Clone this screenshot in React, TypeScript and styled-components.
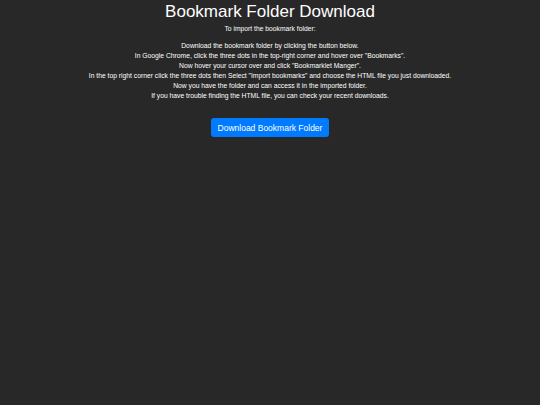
import styled, { createGlobalStyle } from 'styled-components';

const GlobalStyle = createGlobalStyle`
  html, body {
    margin: 0;
    padding: 0;
    background: #282828;
    font-family: "Liberation Sans", Arial, sans-serif;
    color: #ffffff;
  }
`;

const Page = styled.main`
  min-height: 405px;
  display: flex;
  flex-direction: column;
  align-items: center;
  text-align: center;
`;

const Title = styled.h1`
  margin: 0;
  padding-top: 1px;
  font-size: 17px;
  font-weight: 400;
  line-height: 22px;
`;

const Intro = styled.p`
  margin: 1px 0 0;
  font-size: 6.75px;
  line-height: 10px;
`;

const Steps = styled.div`
  margin-top: 7px;
  display: flex;
  flex-direction: column;
  font-size: 6.75px;
  line-height: 10px;
`;

const DownloadButton = styled.button`
  margin-top: 17px;
  padding: 0 7px;
  height: 19px;
  border: none;
  border-radius: 3px;
  background: #007bff;
  color: #ffffff;
  font-family: inherit;
  font-size: 8.5px;
  cursor: pointer;
`;

const steps = [
  'Download the bookmark folder by clicking the button below.',
  'In Google Chrome, click the three dots in the top-right corner and hover over "Bookmarks".',
  'Now hover your cursor over and click "Bookmarklet Manger".',
  'In the top right corner click the three dots then Select "Import bookmarks" and choose the HTML file you just downloaded.',
  'Now you have the folder and can access it in the imported folder.',
  'If you have trouble finding the HTML file, you can check your recent downloads.',
];

const App = () => {
  return (
    <>
      <GlobalStyle />
      <Page>
        <Title>Bookmark Folder Download</Title>
        <Intro>To import the bookmark folder:</Intro>
        <Steps>
          {steps.map((step, i) => (
            <span key={i}>{step}</span>
          ))}
        </Steps>
        <DownloadButton>Download Bookmark Folder</DownloadButton>
      </Page>
    </>
  );
};

export default App;
